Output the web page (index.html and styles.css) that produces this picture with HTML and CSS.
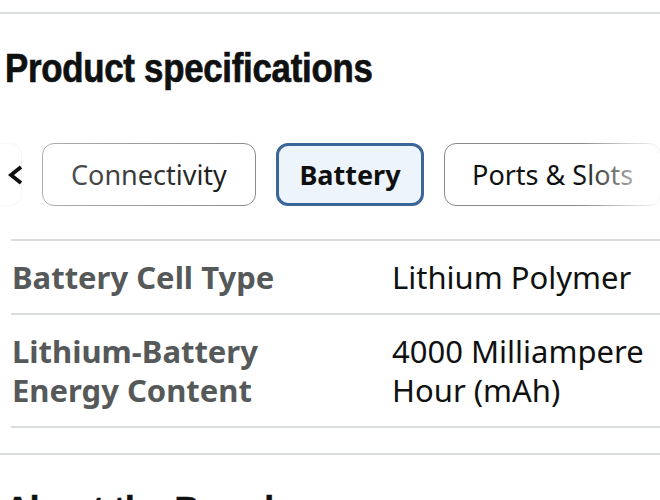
FILE: index.html
```html
<!DOCTYPE html>
<html lang="en">
<head>
<meta charset="utf-8">
<title>Product specifications</title>
<link rel="stylesheet" href="styles.css">
</head>
<body>
  <hr class="rule rule-top">
  <section class="specs-section">
    <h2 class="section-title"><span class="title-text">Product specifications</span></h2>
    <div class="tabs-wrap">
      <div class="tabs">
        <button class="tab tab-prev" aria-label="General"></button>
        <button class="tab tab-connectivity">Connectivity</button>
        <button class="tab tab-active">Battery</button>
        <button class="tab">Ports &amp; Slots</button>
      </div>
      <div class="fade fade-left"></div>
      <div class="fade fade-right"></div>
      <span class="scroll-left" aria-label="Scroll left">
        <svg width="16" height="20" viewBox="0 0 16 20"><polyline points="13,2 3,10 13,18" fill="none" stroke="#0f1111" stroke-width="3.8" stroke-linejoin="miter"/></svg>
      </span>
    </div>
    <div class="specs">
      <div class="spec-row">
        <div class="spec-label">Battery Cell Type</div>
        <div class="spec-value">Lithium Polymer</div>
      </div>
      <div class="spec-row">
        <div class="spec-label">Lithium-Battery Energy Content</div>
        <div class="spec-value">4000 Milliampere Hour (mAh)</div>
      </div>
    </div>
  </section>
  <hr class="rule rule-bottom">
  <section class="brand-section">
    <h2 class="section-title"><span class="title-text">About the Brand</span></h2>
  </section>
</body>
</html>
```
FILE: styles.css
```css
html, body {
  margin: 0;
  padding: 0;
  background: #ffffff;
  overflow: hidden;
}
body {
  font-family: "Noto Sans", "Open Sans", sans-serif;
  color: #0f1111;
}
.rule {
  border: 0;
  height: 2px;
  background: #d9dcdc;
  margin: 0;
}
.rule-top {
  margin-top: 12px;
}
.section-title {
  font-family: "Liberation Sans", "Arial", sans-serif;
  font-weight: 700;
  font-size: 40px;
  line-height: 48px;
  margin: 30px 0 0 5px;
  color: #0f1111;
  white-space: nowrap;
}
.title-text {
  display: inline-block;
  letter-spacing: -0.3px;
  transform: scaleX(0.87);
  transform-origin: left center;
  -webkit-text-stroke: 0.7px #0f1111;
}
.tabs-wrap {
  position: relative;
  margin-top: 51px;
  overflow: hidden;
}
.tabs {
  display: flex;
  gap: 20px;
  white-space: nowrap;
}
.tab {
  flex-shrink: 0;
  box-sizing: border-box;
  height: 63px;
  padding: 0 27px;
  border: 1.5px solid #888c8c;
  border-radius: 12px;
  background: #ffffff;
  font-family: "Noto Sans", "Open Sans", sans-serif;
  font-size: 27px;
  color: #0f1111;
}
.tab-connectivity {
  padding: 0 28px;
}
.tab-prev {
  width: 82px;
  margin-left: -60px;
  border-color: #e6e6e6;
}
.tab-active {
  border: 3.5px solid #3b6699;
  background: #edf4fc;
  font-weight: 700;
  padding: 0 20.5px;
}
.fade {
  position: absolute;
  top: 0;
  bottom: 0;
  pointer-events: none;
}
.fade-left {
  left: 0;
  width: 260px;
  background: linear-gradient(to right, rgba(255,255,255,0.85) 0px, rgba(255,255,255,0.55) 25px, rgba(255,255,255,0.3) 43px, rgba(255,255,255,0) 257px);
}
.fade-right {
  right: 0;
  width: 80px;
  background: linear-gradient(to right, rgba(255,255,255,0) 0, rgba(255,255,255,0.6) 60%, rgba(255,255,255,0.9) 100%);
}
.scroll-left {
  position: absolute;
  left: 8px;
  top: 22px;
  width: 16px;
  height: 20px;
  display: block;
}
.scroll-left svg {
  display: block;
}
.specs {
  margin: 33px 0 0 11px;
  border-top: 2px solid #d9dcdc;
}
.spec-row {
  display: grid;
  grid-template-columns: 381px 1fr;
  padding: 17px 0 16px;
  border-bottom: 2px solid #d9dcdc;
  font-size: 31px;
  line-height: 39px;
}
.spec-label {
  font-weight: 700;
  color: #565959;
  padding-left: 1px;
  padding-right: 20px;
}
.spec-value {
  color: #0f1111;
}
.rule-bottom {
  margin-top: 25px;
}
.brand-section {
  padding: 0;
}
.brand-section .section-title {
  margin-top: 32px;
}
```
